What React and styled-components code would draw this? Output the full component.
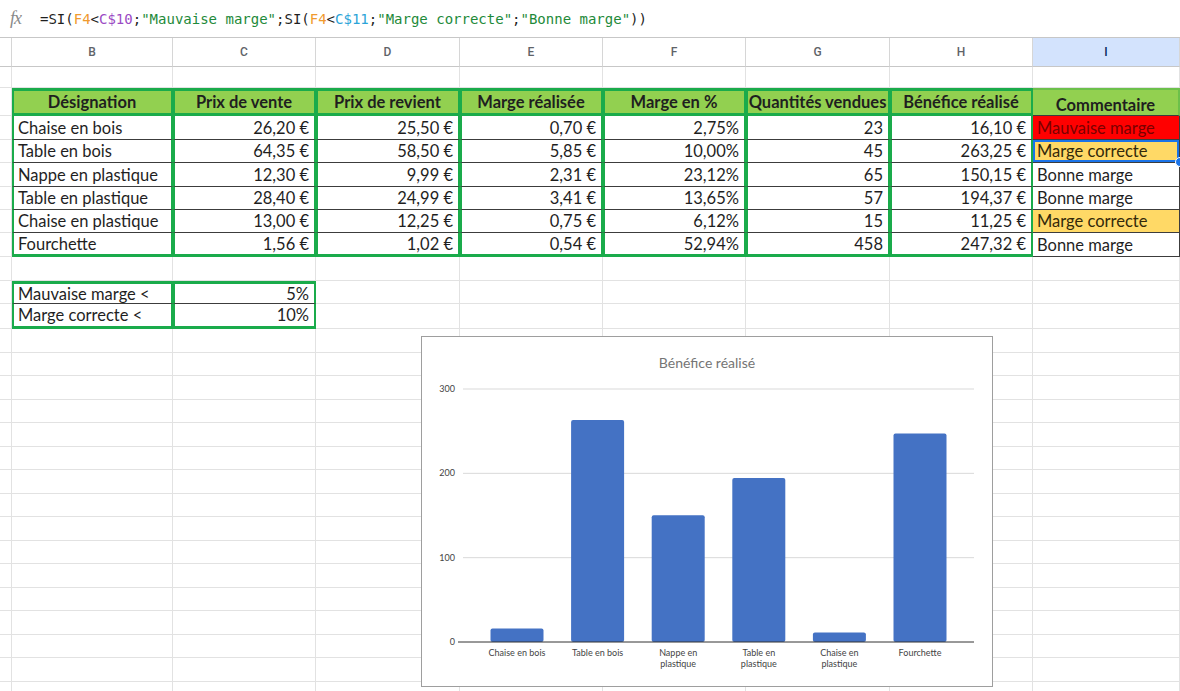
import React from "react";
import styled, { createGlobalStyle } from "styled-components";

const GREEN = "#1aab4b";
const G2 = `2px solid ${GREEN}`;
const G3 = `3px solid ${GREEN}`;
const DARK = "1px solid #3c3c3c";
const GRID = "1px solid #e2e2e2";

const COLS = [12, 161, 143, 144, 143, 143, 144, 143, 147];
const LETTERS = ["", "B", "C", "D", "E", "F", "G", "H", "I"];

const GlobalStyle = createGlobalStyle`
  html, body {
    margin: 0;
    padding: 0;
    background: #ffffff;
    overflow: hidden;
  }
  body {
    font-family: Lato, "Open Sans", sans-serif;
  }
`;

const Page = styled.div`
  width: 1180px;
  height: 691px;
  display: flex;
  flex-direction: column;
  overflow: hidden;
`;

const FormulaBar = styled.div`
  height: 38px;
  flex: none;
  box-sizing: border-box;
  display: flex;
  align-items: center;
  padding-left: 10px;
  border-bottom: 1px solid #c7c7c7;
`;

const Fx = styled.span`
  width: 30px;
  font-family: "Liberation Serif", serif;
  font-style: italic;
  font-size: 18px;
  color: #8a8a8a;
  letter-spacing: -1px;
`;

const Formula = styled.span`
  font-family: "DejaVu Sans Mono", "Liberation Mono", monospace;
  font-size: 14px;
  color: #1f1f1f;
  white-space: pre;
`;

const Tok = styled.span`
  color: ${(p) => p.$c};
`;

const HeaderRow = styled.div`
  height: 29px;
  flex: none;
  display: grid;
  grid-template-columns: ${COLS.map((w) => w + "px").join(" ")};
`;

const ColHead = styled.div`
  box-sizing: border-box;
  display: flex;
  align-items: center;
  justify-content: center;
  font-family: Roboto, sans-serif;
  font-size: 12px;
  font-weight: 500;
  color: ${(p) => (p.$active ? "#0b2a5c" : "#5f6368")};
  background: ${(p) => (p.$active ? "#d3e3fd" : "#ffffff")};
  border-right: 1px solid #d6d6d6;
  border-bottom: 1px solid #c7c7c7;
`;

const Sheet = styled.div`
  position: relative;
  flex: 1;
  display: grid;
  grid-template-columns: ${COLS.map((w) => w + "px").join(" ")};
  grid-template-rows: 21px 28px 24px 23px 24px 23px 23px 24px 24px 23px 25px repeat(16, 23.5px);
`;

const Cell = styled.div`
  position: relative;
  box-sizing: border-box;
  min-width: 0;
  display: flex;
  align-items: ${(p) => (p.$low ? "flex-end" : "center")};
  justify-content: ${(p) =>
    p.$align === "right" ? "flex-end" : p.$align === "center" ? "center" : "flex-start"};
  padding: ${(p) => (p.$low ? "0 4px 0" : "0 5px 0 4px")};
  white-space: nowrap;
  font-size: 16.5px;
  font-weight: ${(p) => (p.$bold ? 700 : 400)};
  color: ${(p) => p.$fg || "#1f1f1f"};
  background: ${(p) => p.$bg || "transparent"};
  border-left: ${(p) => p.$bl || "none"};
  border-top: ${(p) => p.$bt || "none"};
  border-right: ${(p) => p.$br || GRID};
  border-bottom: ${(p) => p.$bb || GRID};
  box-shadow: ${(p) => (p.$selected ? "inset 0 0 0 2px #1a73e8" : "none")};

  ${(p) =>
    p.$selected &&
    `
    &::after {
      content: "";
      position: absolute;
      right: -6px;
      bottom: -5px;
      width: 8px;
      height: 8px;
      border-radius: 50%;
      background: #1a73e8;
      border: 1px solid #ffffff;
      z-index: 2;
    }
  `}
`;

const ChartFrame = styled.div`
  position: absolute;
  left: 421px;
  top: 269px;
  width: 572px;
  height: 351px;
  box-sizing: border-box;
  background: #ffffff;
  border: 1px solid #9e9e9e;
`;

const headers = [
  "Désignation",
  "Prix de vente",
  "Prix de revient",
  "Marge réalisée",
  "Marge en %",
  "Quantités vendues",
  "Bénéfice réalisé",
];

const products = [
  ["Chaise en bois", "26,20 €", "25,50 €", "0,70 €", "2,75%", "23", "16,10 €", "Mauvaise marge", 16.1],
  ["Table en bois", "64,35 €", "58,50 €", "5,85 €", "10,00%", "45", "263,25 €", "Marge correcte", 263.25],
  ["Nappe en plastique", "12,30 €", "9,99 €", "2,31 €", "23,12%", "65", "150,15 €", "Bonne marge", 150.15],
  ["Table en plastique", "28,40 €", "24,99 €", "3,41 €", "13,65%", "57", "194,37 €", "Bonne marge", 194.37],
  ["Chaise en plastique", "13,00 €", "12,25 €", "0,75 €", "6,12%", "15", "11,25 €", "Marge correcte", 11.25],
  ["Fourchette", "1,56 €", "1,02 €", "0,54 €", "52,94%", "458", "247,32 €", "Bonne marge", 247.32],
];

const thresholds = [
  ["Mauvaise marge <", "5%"],
  ["Marge correcte <", "10%"],
];

const commentStyle = {
  "Mauvaise marge": { bg: "#ff0000", fg: "#7a0000" },
  "Marge correcte": { bg: "#ffd966", fg: "#33290a" },
  "Bonne marge": { bg: "transparent", fg: "#1f1f1f" },
};

const chartLabels = [
  ["Chaise en bois"],
  ["Table en bois"],
  ["Nappe en", "plastique"],
  ["Table en", "plastique"],
  ["Chaise en", "plastique"],
  ["Fourchette"],
];

function BenefitChart() {
  const base = 305;
  const scale = 253 / 300;
  return (
    <svg width="570" height="349" viewBox="0 0 570 349" fontFamily="Lato, sans-serif">
      <text x="285" y="31" textAnchor="middle" fontSize="14" fill="#757575">
        Bénéfice réalisé
      </text>
      {[300, 200, 100].map((v) => (
        <g key={v}>
          <line x1="41" x2="552" y1={base - v * scale} y2={base - v * scale} stroke="#d9d9d9" />
          <text x="33" y={base - v * scale + 3} textAnchor="end" fontSize="9" fill="#444">
            {v}
          </text>
        </g>
      ))}
      <text x="33" y={base + 3} textAnchor="end" fontSize="9" fill="#444">
        0
      </text>
      {products.map((p, i) => {
        const cx = 95 + i * 80.6;
        const h = p[8] * scale;
        return (
          <g key={p[0]}>
            <rect x={cx - 26.5} y={base - h} width="53" height={h} rx="2" fill="#4472c4" />
            {chartLabels[i].map((line, j) => (
              <text key={line} x={cx} y={319 + j * 11} textAnchor="middle" fontSize="9" fill="#444">
                {line}
              </text>
            ))}
          </g>
        );
      })}
      <line x1="36" x2="552" y1={base} y2={base} stroke="#333" />
    </svg>
  );
}

function tableHeader() {
  const cells = [<Cell key="h0" />];
  headers.forEach((h) => {
    cells.push(
      <Cell key={h} $bold $align="center" $bg="#92d050" $bl={G2} $br={G2} $bt={G3} $bb={G3}>
        {h}
      </Cell>
    );
  });
  cells.push(
    <Cell
      key="hI"
      $bold
      $low
      $align="center"
      $bg="#92d050"
      $bt="2px solid #6cc04a"
      $br="2px solid #6cc04a"
      $bb={DARK}
    >
      Commentaire
    </Cell>
  );
  return cells;
}

function productRow(p, r) {
  const last = r === products.length - 1;
  const bb = last ? G3 : DARK;
  const note = commentStyle[p[7]];
  const cells = [<Cell key="a" />];
  p.slice(0, 7).forEach((v, c) => {
    cells.push(
      <Cell key={c} $align={c === 0 ? "left" : "right"} $bl={G2} $br={G2} $bb={bb}>
        {v}
      </Cell>
    );
  });
  cells.push(
    <Cell key="i" $bg={note.bg} $fg={note.fg} $br={DARK} $bb={DARK} $selected={r === 1}>
      {p[7]}
    </Cell>
  );
  return cells;
}

function thresholdRow(t, r) {
  const cells = [<Cell key="a" />];
  cells.push(
    <Cell key="b" $bl={G2} $br={G2} $bt={r === 0 ? G3 : "none"} $bb={r === 0 ? DARK : G3}>
      {t[0]}
    </Cell>
  );
  cells.push(
    <Cell key="c" $align="right" $bl={G2} $br={G2} $bt={r === 0 ? G3 : "none"} $bb={r === 0 ? DARK : G3}>
      {t[1]}
    </Cell>
  );
  for (let c = 3; c < COLS.length; c++) cells.push(<Cell key={c} />);
  return cells;
}

function emptyRow(key) {
  return COLS.map((_, c) => <Cell key={key + "-" + c} />);
}

export default function App() {
  const rows = [];
  rows.push(...emptyRow("r1"));
  rows.push(...tableHeader());
  products.forEach((p, r) => rows.push(...productRow(p, r).map((el, c) => React.cloneElement(el, { key: `p${r}-${c}` }))));
  rows.push(...emptyRow("r9"));
  thresholds.forEach((t, r) => rows.push(...thresholdRow(t, r).map((el, c) => React.cloneElement(el, { key: `t${r}-${c}` }))));
  for (let r = 0; r < 16; r++) rows.push(...emptyRow("e" + r));

  return (
    <Page>
      <GlobalStyle />
      <FormulaBar>
        <Fx>fx</Fx>
        <Formula>
          =SI(<Tok $c="#f09a2e">F4</Tok>&lt;<Tok $c="#9b4bc4">C$10</Tok>;
          <Tok $c="#1e8a3a">"Mauvaise marge"</Tok>;SI(<Tok $c="#f09a2e">F4</Tok>&lt;
          <Tok $c="#2ba4d8">C$11</Tok>;<Tok $c="#1e8a3a">"Marge correcte"</Tok>;
          <Tok $c="#1e8a3a">"Bonne marge"</Tok>))
        </Formula>
      </FormulaBar>
      <HeaderRow>
        {LETTERS.map((l, i) => (
          <ColHead key={i} $active={l === "I"}>
            {l}
          </ColHead>
        ))}
      </HeaderRow>
      <Sheet>
        {rows}
        <ChartFrame>
          <BenefitChart />
        </ChartFrame>
      </Sheet>
    </Page>
  );
}
